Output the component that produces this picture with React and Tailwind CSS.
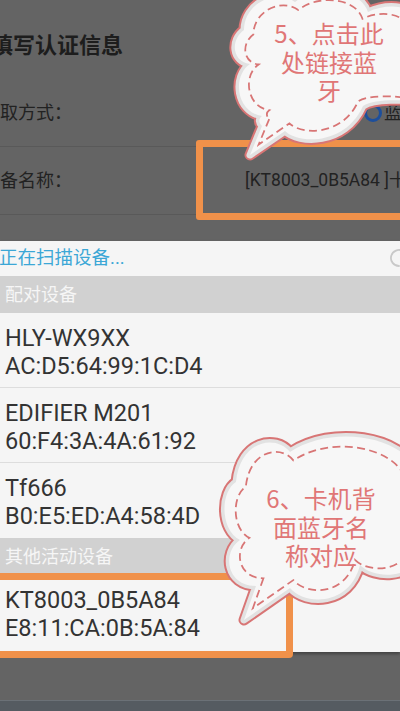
import React from 'react';

const pairedDevices = [
  { name: 'HLY-WX9XX', mac: 'AC:D5:64:99:1C:D4' },
  { name: 'EDIFIER M201', mac: '60:F4:3A:4A:61:92' },
  { name: 'Tf666', mac: 'B0:E5:ED:A4:58:4D' },
];

const cloudOne =
  'M262 126 L250 155 L285 131 C298 144 345 146 363 106 C375 98 405 100 420 102 L420 18 C408 4 385 4 368 12 C360 -12 318 -16 295 2 C275 -12 244 4 244 30 C230 40 232 62 250 64 C232 76 236 112 262 116 C258 119 259 123 262 126 Z';

const cloudTwo =
  'M256 586 L244 620 L290 588 C305 606 350 606 360 565 C375 580 410 577 416 560 L416 470 C402 436 332 424 290 452 C276 434 240 440 236 482 C220 492 220 530 240 540 C222 552 226 586 256 586 Z';

const Cloud = ({ d, cx, cy }) => (
  <g>
    <path d={d} fill="none" stroke="#d87575" strokeWidth="11" strokeLinejoin="round" />
    <path d={d} fill="none" stroke="#e2e2e2" strokeWidth="7" strokeLinejoin="round" />
    <path d={d} fill="#f7f7f7" />
    <path
      d={d}
      fill="none"
      stroke="#d87575"
      strokeWidth="2"
      strokeDasharray="9 5"
      transform={`translate(${cx} ${cy}) scale(0.88) translate(${-cx} ${-cy})`}
    />
  </g>
);

const DeviceRow = ({ name, mac, last }) => (
  <div className={`h-[75px] pt-[11px] ${last ? '' : 'border-b border-[#dddddd]'}`}>
    <div className="pl-[5px] text-[23.5px] leading-[28px] text-[#333333] whitespace-nowrap">
      <div>{name}</div>
      <div>{mac}</div>
    </div>
  </div>
);

const SectionHeader = ({ label }) => (
  <div className="h-[37px] bg-[#d1d1d1] flex items-center pl-[5px] text-[18px] text-[#f6f6f6]">
    {label}
  </div>
);

export default function App() {
  return (
    <div className="relative w-[400px] h-[711px] overflow-hidden bg-[#646464] flex flex-col font-[Roboto,'Noto_Sans_CJK_SC',sans-serif]">
      {/* dimmed settings page */}
      <div className="h-[241px] shrink-0">
        <div className="h-[79px] pt-[11px] flex items-center">
          <div className="-ml-[9px] text-[22px] font-bold text-[#1d1d1d] whitespace-nowrap">填写认证信息</div>
        </div>
        <div className="h-[68px] border-b border-[#595959] flex items-center text-[18px] text-[#222222]">
          <div className="-ml-[18px] w-[382px] shrink-0 whitespace-nowrap">获取方式：</div>
          <div className="w-[18px] h-[18px] shrink-0 rounded-full border-[3px] border-[#1d4f9c]" />
          <div className="ml-[2px] whitespace-nowrap">蓝牙</div>
        </div>
        <div className="h-[68px] border-b border-[#595959] flex items-center text-[18px] text-[#222222]">
          <div className="-ml-[18px] w-[263px] shrink-0 whitespace-nowrap">设备名称：</div>
          <div className="text-[17.5px] whitespace-nowrap">[KT8003_0B5A84 ]十</div>
        </div>
      </div>

      {/* bluetooth dialog */}
      <div className="h-[411px] shrink-0 bg-[#f5f5f5] shadow-[0_2px_3px_rgba(0,0,0,0.35)]">
        <div className="h-[35px] flex items-center justify-between">
          <div className="-ml-[1px] text-[18.5px] text-[#3ca7d6] whitespace-nowrap">正在扫描设备...</div>
          <svg className="w-[20px] h-[20px] -mr-[9px] mt-[-2px]" viewBox="0 0 20 20">
            <path d="M14 3.1 A8 8 0 1 0 10 18" fill="none" stroke="#c9c9c9" strokeWidth="1.8" strokeLinecap="round" />
          </svg>
        </div>
        <SectionHeader label="配对设备" />
        {pairedDevices.map((d, i) => (
          <DeviceRow key={d.mac} name={d.name} mac={d.mac} last={i === pairedDevices.length - 1} />
        ))}
        <SectionHeader label="其他活动设备" />
        <DeviceRow name="KT8003_0B5A84" mac="E8:11:CA:0B:5A:84" last />
      </div>

      <div className="flex-1" />
      <div className="h-[11px] shrink-0 bg-[#555b61] border-t border-[#6b7177]" />

      {/* highlight boxes */}
      <div className="absolute left-[196px] top-[140px] w-[215px] h-[80px] border-[7px] border-[#f0914a] rounded-[3px]" />
      <div className="absolute left-[-8px] top-[573px] w-[301px] h-[85px] border-[7px] border-[#f0914a] rounded-[4px]" />

      {/* callout clouds */}
      <svg className="absolute left-0 top-0 pointer-events-none" width="400" height="711" viewBox="0 0 400 711">
        <Cloud d={cloudOne} cx={322} cy={68} />
        <Cloud d={cloudTwo} cx={318} cy={522} />
      </svg>
      <div className="absolute left-[260px] top-[19px] w-[138px] text-center text-[24px] leading-[28.5px] text-[#e07676] font-['Noto_Sans_CJK_SC',sans-serif]">
        5、点击此<br />处链接蓝<br />牙
      </div>
      <div className="absolute left-[252px] top-[484px] w-[138px] text-center text-[24px] leading-[28.5px] text-[#e07676] font-['Noto_Sans_CJK_SC',sans-serif]">
        6、卡机背<br />面蓝牙名<br />称对应
      </div>
    </div>
  );
}
